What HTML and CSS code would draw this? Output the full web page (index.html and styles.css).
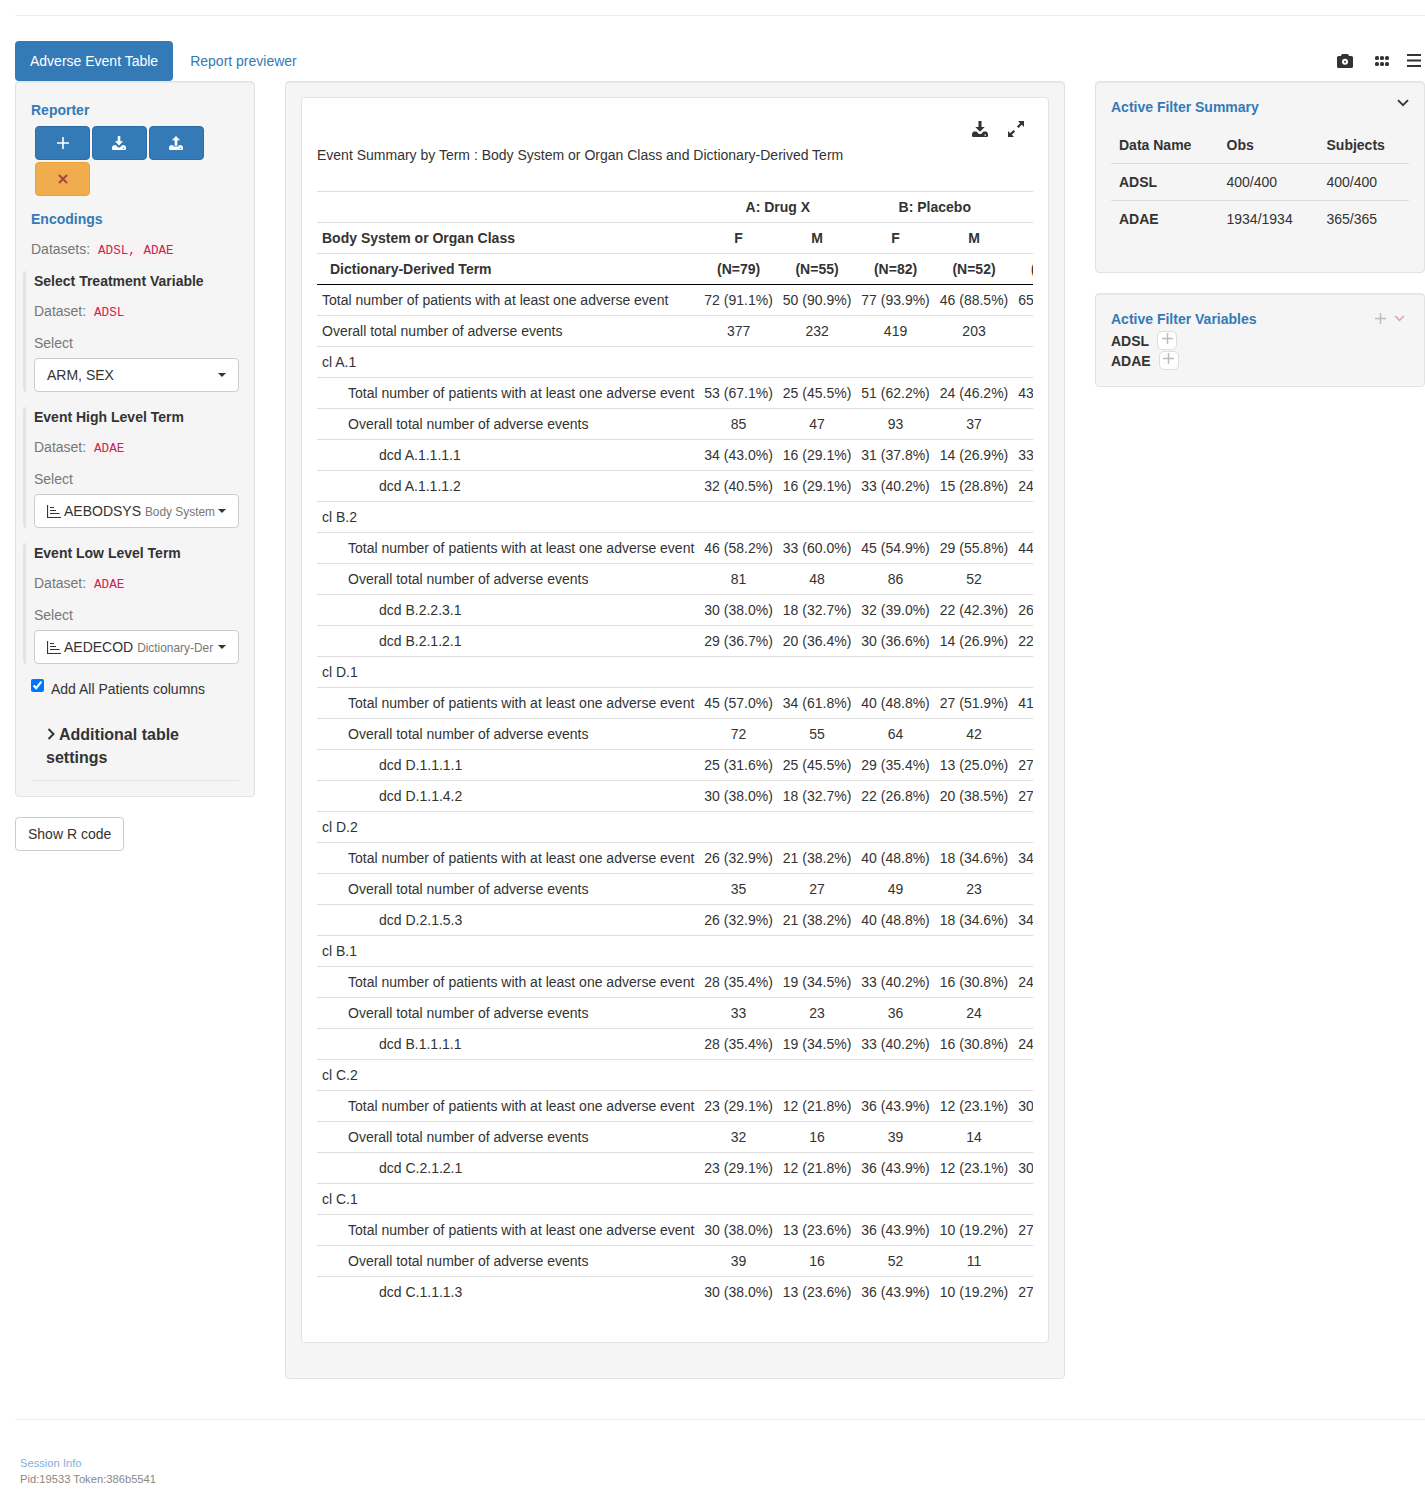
FILE: index.html
```html
<!DOCTYPE html>
<html lang="en">
<head>
  <meta charset="UTF-8">
  <title>Adverse Event Table</title>
  <link rel="stylesheet" href="styles.css">
</head>
<body>
  <svg class="icon-defs" width="0" height="0">
    <symbol id="i-download" viewBox="0 0 16 16">
      <path d="M6.500 0h3v6h3.200L8 10.800 3.300 6h3.200z"/>
      <path fill-rule="evenodd" d="M1.500 10.500h3L7 13h2l2.500-2.500h3L16 12.500v2.300a1.200 1.200 0 0 1-1.200 1.200H1.200A1.200 1.200 0 0 1 0 14.800v-2.300zM13.200 13.300a.8.800 0 1 0 0 1.600.8.800 0 0 0 0-1.600z"/>
    </symbol>
    <symbol id="i-upload" viewBox="0 0 16 16">
      <path d="M8 0l4.700 4.800H9.500v6.200h-3V4.800H3.300z"/>
      <path fill-rule="evenodd" d="M1.500 10.500h3.500V12h6v-1.500h3.500L16 12.500v2.300a1.200 1.200 0 0 1-1.200 1.200H1.200A1.200 1.200 0 0 1 0 14.800v-2.300zM13.200 13.300a.8.800 0 1 0 0 1.600.8.800 0 0 0 0-1.600z"/>
    </symbol>
    <symbol id="i-chart" viewBox="0 0 14 14">
      <path d="M0 1h1.100v11.900H14V14H0zM3 3h4v1.100H3zM3 6h6v1.100H3zM3 9h9.500v1.100H3z"/>
    </symbol>
    <symbol id="i-plus" viewBox="0 0 12 12">
      <path d="M5.200 0h1.600v5.200H12v1.600H6.800V12H5.200V6.800H0V5.200h5.200z"/>
    </symbol>
    <symbol id="i-chevron" viewBox="0 0 12 8">
      <path d="M1 1.200l5 5 5-5" fill="none" stroke="currentColor" stroke-width="1.800"/>
    </symbol>
  </svg>

  <div class="top-rule"></div>

  <div class="tabs-bar">
    <ul class="tabs">
      <li class="tab active">Adverse Event Table</li>
      <li class="tab">Report previewer</li>
    </ul>
    <div class="page-tools">
      <svg class="tool-camera" viewBox="0 0 16 14"><path fill-rule="evenodd" d="M5.500 0h5a1 1 0 0 1 .9.600L12 2h2.400A1.600 1.600 0 0 1 16 3.600v8.800a1.600 1.600 0 0 1-1.600 1.600H1.600A1.600 1.600 0 0 1 0 12.400V3.600A1.600 1.600 0 0 1 1.600 2H4l.6-1.400a1 1 0 0 1 .9-.6zM8 4.800a3 3 0 1 0 0 6 3 3 0 0 0 0-6z"/><circle cx="8" cy="7.800" r="1"/></svg>
      <svg class="tool-grid" viewBox="0 0 14 10"><rect width="4" height="4" rx="1.600"/><rect x="5" width="4" height="4" rx="1.600"/><rect x="10" width="4" height="4" rx="1.600"/><rect y="6" width="4" height="4" rx="1.600"/><rect x="5" y="6" width="4" height="4" rx="1.600"/><rect x="10" y="6" width="4" height="4" rx="1.600"/></svg>
      <svg class="tool-bars" viewBox="0 0 14 13"><rect width="14" height="2"/><rect y="5.500" width="14" height="2"/><rect y="11" width="14" height="2"/></svg>
    </div>
  </div>

  <div class="layout">
    <div class="left-col">
      <div class="well encodings">
        <div class="section-title">Reporter</div>
        <div class="reporter-btns">
          <button class="btn-rep"><svg class="ic-plus"><use href="#i-plus"/></svg></button>
          <button class="btn-rep"><svg class="ic-tray"><use href="#i-download"/></svg></button>
          <button class="btn-rep"><svg class="ic-tray"><use href="#i-upload"/></svg></button>
          <button class="btn-rep btn-warn"><svg class="ic-times" viewBox="0 0 10 10"><path d="M1 1l8 8M9 1l-8 8" fill="none" stroke="currentColor" stroke-width="2"/></svg></button>
        </div>
        <div class="section-title encodings-title">Encodings</div>
        <div class="dataset-line datasets-all">Datasets: <code>ADSL, ADAE</code></div>

        <div class="enc-block">
          <div class="enc-title">Select Treatment Variable</div>
          <div class="dataset-line">Dataset: <code>ADSL</code></div>
          <div class="select-label">Select</div>
          <div class="picker"><span class="picker-text">ARM, SEX</span><span class="caret"></span></div>
        </div>

        <div class="enc-block">
          <div class="enc-title">Event High Level Term</div>
          <div class="dataset-line">Dataset: <code>ADAE</code></div>
          <div class="select-label">Select</div>
          <div class="picker"><span class="picker-text"><svg class="ic-chart"><use href="#i-chart"/></svg>AEBODSYS <small>Body System</small></span><span class="caret"></span></div>
        </div>

        <div class="enc-block">
          <div class="enc-title">Event Low Level Term</div>
          <div class="dataset-line">Dataset: <code>ADAE</code></div>
          <div class="select-label">Select</div>
          <div class="picker"><span class="picker-text"><svg class="ic-chart"><use href="#i-chart"/></svg>AEDECOD <small>Dictionary-Der</small></span><span class="caret"></span></div>
        </div>

        <label class="check-line"><input type="checkbox" checked> Add All Patients columns</label>

        <div class="more-settings"><svg class="ic-more" viewBox="0 0 8 12"><path d="M1.500 1l5 5-5 5" fill="none" stroke="currentColor" stroke-width="2"/></svg>Additional table settings</div>
        <hr class="settings-rule">
      </div>
      <button class="btn-code">Show R code</button>
    </div>

    <div class="well main-col">
      <div class="table-card">
        <div class="card-tools">
          <svg class="ic-card-dl"><use href="#i-download"/></svg>
          <svg class="ic-card-exp" viewBox="0 0 16 16"><path d="M10 0h6v6l-2.200-2.200-3.300 3.300-1.600-1.600 3.300-3.300zM6 16H0v-6l2.200 2.200 3.300-3.300 1.600 1.600-3.300 3.300z"/></svg>
        </div>
        <div class="table-title">Event Summary by Term : Body System or Organ Class and Dictionary-Derived Term</div>
        <div class="table-clip">
          <table class="ae-table">
            <thead>
              <tr><th></th><th colspan="2">A: Drug X</th><th colspan="2">B: Placebo</th><th colspan="2">C: Combination</th></tr>
              <tr><th class="first">Body System or Organ Class</th><th>F</th><th>M</th><th>F</th><th>M</th><th>F</th><th>M</th></tr>
              <tr class="head-last"><th class="first sub">Dictionary-Derived Term</th><th>(N=79)</th><th>(N=55)</th><th>(N=82)</th><th>(N=52)</th><th>(N=70)</th><th>(N=62)</th></tr>
            </thead>
            <tbody>
              <tr><td>Total number of patients with at least one adverse event</td><td>72 (91.1%)</td><td>50 (90.9%)</td><td>77 (93.9%)</td><td>46 (88.5%)</td><td>65 (92.9%)</td><td></td></tr>
              <tr><td>Overall total number of adverse events</td><td>377</td><td>232</td><td>419</td><td>203</td><td></td><td></td></tr>
              <tr><td colspan="7">cl A.1</td></tr>
              <tr><td class="l1">Total number of patients with at least one adverse event</td><td>53 (67.1%)</td><td>25 (45.5%)</td><td>51 (62.2%)</td><td>24 (46.2%)</td><td>43 (61.4%)</td><td></td></tr>
              <tr><td class="l1">Overall total number of adverse events</td><td>85</td><td>47</td><td>93</td><td>37</td><td></td><td></td></tr>
              <tr><td class="l2">dcd A.1.1.1.1</td><td>34 (43.0%)</td><td>16 (29.1%)</td><td>31 (37.8%)</td><td>14 (26.9%)</td><td>33 (47.1%)</td><td></td></tr>
              <tr><td class="l2">dcd A.1.1.1.2</td><td>32 (40.5%)</td><td>16 (29.1%)</td><td>33 (40.2%)</td><td>15 (28.8%)</td><td>24 (34.3%)</td><td></td></tr>
              <tr><td colspan="7">cl B.2</td></tr>
              <tr><td class="l1">Total number of patients with at least one adverse event</td><td>46 (58.2%)</td><td>33 (60.0%)</td><td>45 (54.9%)</td><td>29 (55.8%)</td><td>44 (62.9%)</td><td></td></tr>
              <tr><td class="l1">Overall total number of adverse events</td><td>81</td><td>48</td><td>86</td><td>52</td><td></td><td></td></tr>
              <tr><td class="l2">dcd B.2.2.3.1</td><td>30 (38.0%)</td><td>18 (32.7%)</td><td>32 (39.0%)</td><td>22 (42.3%)</td><td>26 (37.1%)</td><td></td></tr>
              <tr><td class="l2">dcd B.2.1.2.1</td><td>29 (36.7%)</td><td>20 (36.4%)</td><td>30 (36.6%)</td><td>14 (26.9%)</td><td>22 (31.4%)</td><td></td></tr>
              <tr><td colspan="7">cl D.1</td></tr>
              <tr><td class="l1">Total number of patients with at least one adverse event</td><td>45 (57.0%)</td><td>34 (61.8%)</td><td>40 (48.8%)</td><td>27 (51.9%)</td><td>41 (58.6%)</td><td></td></tr>
              <tr><td class="l1">Overall total number of adverse events</td><td>72</td><td>55</td><td>64</td><td>42</td><td></td><td></td></tr>
              <tr><td class="l2">dcd D.1.1.1.1</td><td>25 (31.6%)</td><td>25 (45.5%)</td><td>29 (35.4%)</td><td>13 (25.0%)</td><td>27 (38.6%)</td><td></td></tr>
              <tr><td class="l2">dcd D.1.1.4.2</td><td>30 (38.0%)</td><td>18 (32.7%)</td><td>22 (26.8%)</td><td>20 (38.5%)</td><td>27 (38.6%)</td><td></td></tr>
              <tr><td colspan="7">cl D.2</td></tr>
              <tr><td class="l1">Total number of patients with at least one adverse event</td><td>26 (32.9%)</td><td>21 (38.2%)</td><td>40 (48.8%)</td><td>18 (34.6%)</td><td>34 (48.6%)</td><td></td></tr>
              <tr><td class="l1">Overall total number of adverse events</td><td>35</td><td>27</td><td>49</td><td>23</td><td></td><td></td></tr>
              <tr><td class="l2">dcd D.2.1.5.3</td><td>26 (32.9%)</td><td>21 (38.2%)</td><td>40 (48.8%)</td><td>18 (34.6%)</td><td>34 (48.6%)</td><td></td></tr>
              <tr><td colspan="7">cl B.1</td></tr>
              <tr><td class="l1">Total number of patients with at least one adverse event</td><td>28 (35.4%)</td><td>19 (34.5%)</td><td>33 (40.2%)</td><td>16 (30.8%)</td><td>24 (34.3%)</td><td></td></tr>
              <tr><td class="l1">Overall total number of adverse events</td><td>33</td><td>23</td><td>36</td><td>24</td><td></td><td></td></tr>
              <tr><td class="l2">dcd B.1.1.1.1</td><td>28 (35.4%)</td><td>19 (34.5%)</td><td>33 (40.2%)</td><td>16 (30.8%)</td><td>24 (34.3%)</td><td></td></tr>
              <tr><td colspan="7">cl C.2</td></tr>
              <tr><td class="l1">Total number of patients with at least one adverse event</td><td>23 (29.1%)</td><td>12 (21.8%)</td><td>36 (43.9%)</td><td>12 (23.1%)</td><td>30 (42.9%)</td><td></td></tr>
              <tr><td class="l1">Overall total number of adverse events</td><td>32</td><td>16</td><td>39</td><td>14</td><td></td><td></td></tr>
              <tr><td class="l2">dcd C.2.1.2.1</td><td>23 (29.1%)</td><td>12 (21.8%)</td><td>36 (43.9%)</td><td>12 (23.1%)</td><td>30 (42.9%)</td><td></td></tr>
              <tr><td colspan="7">cl C.1</td></tr>
              <tr><td class="l1">Total number of patients with at least one adverse event</td><td>30 (38.0%)</td><td>13 (23.6%)</td><td>36 (43.9%)</td><td>10 (19.2%)</td><td>27 (38.6%)</td><td></td></tr>
              <tr><td class="l1">Overall total number of adverse events</td><td>39</td><td>16</td><td>52</td><td>11</td><td></td><td></td></tr>
              <tr><td class="l2">dcd C.1.1.1.3</td><td>30 (38.0%)</td><td>13 (23.6%)</td><td>36 (43.9%)</td><td>10 (19.2%)</td><td>27 (38.6%)</td><td></td></tr>
            </tbody>
          </table>
        </div>
      </div>
    </div>

    <div class="right-col">
      <div class="well filter-summary">
        <div class="filter-head">
          <span class="section-title">Active Filter Summary</span>
          <svg class="ic-collapse"><use href="#i-chevron"/></svg>
        </div>
        <table class="summary-table">
          <thead><tr><th>Data Name</th><th>Obs</th><th>Subjects</th></tr></thead>
          <tbody>
            <tr><th>ADSL</th><td>400/400</td><td>400/400</td></tr>
            <tr><th>ADAE</th><td>1934/1934</td><td>365/365</td></tr>
          </tbody>
        </table>
      </div>
      <div class="well filter-vars">
        <div class="filter-head">
          <span class="section-title">Active Filter Variables</span>
          <span class="vars-tools">
            <svg class="ic-add"><use href="#i-plus"/></svg>
            <svg class="ic-collapse-red"><use href="#i-chevron"/></svg>
          </span>
        </div>
        <div class="var-list">
          <div class="var-row"><b>ADSL</b><span class="var-add"><svg class="ic-add"><use href="#i-plus"/></svg></span></div>
          <div class="var-row"><b>ADAE</b><span class="var-add"><svg class="ic-add"><use href="#i-plus"/></svg></span></div>
        </div>
      </div>
    </div>
  </div>

  <footer class="page-foot">
    <div class="session-link">Session Info</div>
    <div class="session-ids">Pid:19533 Token:386b5541</div>
  </footer>
</body>
</html>
```
FILE: styles.css
```css
* {
  box-sizing: border-box;
}

html, body {
  overflow-x: hidden;
}

body {
  margin: 0;
  padding: 0 0 0 15px;
  font-family: "Liberation Sans", Arial, sans-serif;
  font-size: 14px;
  line-height: 20px;
  color: #333;
  background: #fff;
}

.icon-defs {
  position: absolute;
}

.top-rule {
  height: 16px;
  margin-left: 0;
  border-bottom: 1px solid #eee;
}

/* tabs row */
.tabs-bar {
  display: flex;
  justify-content: space-between;
  margin-top: 25px;
  height: 40px;
}

.tabs {
  display: flex;
  gap: 2px;
  list-style: none;
  margin: 0;
  padding: 0;
}

.tab {
  padding: 10px 15px;
  border-radius: 4px;
  color: #337ab7;
}

.tab.active {
  background: #337ab7;
  color: #fff;
}

.page-tools {
  display: flex;
  align-items: center;
  padding: 0 4px 1px 0;
  fill: #333;
}

.tool-camera {
  width: 16px;
  height: 14px;
  margin-right: 22px;
}

.tool-grid {
  width: 14px;
  height: 10px;
  margin-right: 18px;
}

.tool-bars {
  width: 14px;
  height: 13px;
}

/* three columns */
.layout {
  display: flex;
  gap: 30px;
  align-items: flex-start;
}

.well {
  background: #f5f5f5;
  border: 1px solid #e3e3e3;
  border-radius: 4px;
  box-shadow: inset 0 1px 1px rgba(0, 0, 0, .05);
}

.section-title {
  color: #337ab7;
  font-weight: bold;
}

.left-col {
  width: 240px;
  flex: none;
}

.encodings {
  padding: 18px 15px 16px;
  height: 716px;
}

.reporter-btns {
  display: flex;
  flex-wrap: wrap;
  gap: 2px;
  margin: 6px 0 0 4px;
  width: 175px;
}

.btn-rep {
  display: flex;
  align-items: center;
  justify-content: center;
  width: 55px;
  height: 34px;
  padding: 0;
  background: #337ab7;
  border: 1px solid #2e6da4;
  border-radius: 4px;
  color: #fff;
  fill: #fff;
}

.btn-warn {
  background: #f0ad4e;
  border-color: #eea236;
  color: #a94442;
}

.ic-plus {
  width: 12px;
  height: 12px;
}

.ic-tray {
  width: 14px;
  height: 14px;
  margin: 0 2px 1px 0;
}

.ic-times {
  width: 10px;
  height: 10px;
}

.encodings-title {
  margin-top: 13px;
}

.dataset-line {
  color: #777;
  margin-top: 10px;
}

code {
  font-family: "Liberation Mono", monospace;
  font-size: 12.6px;
  color: #c7254e;
  background: #f9f2f4;
  padding: 2px 4px;
  border-radius: 4px;
}

.datasets-all {
  margin-bottom: 10px;
}

.enc-block {
  margin: 0 0 15px -8px;
  padding-left: 8px;
  border-left: 3px solid #e3e3e3;
  border-radius: 4px;
  height: 121px;
}

.enc-title {
  font-weight: bold;
}

.select-label {
  color: #777;
  margin-top: 10px;
}

.enc-block .dataset-line {
  margin-top: 10px;
}

.picker {
  display: flex;
  align-items: center;
  justify-content: space-between;
  height: 34px;
  margin-top: 5px;
  padding: 0 12px;
  background: #fff;
  border: 1px solid #ccc;
  border-radius: 4px;
  white-space: nowrap;
  overflow: hidden;
}

.picker small {
  font-size: 11.9px;
  color: #777;
}

.caret {
  flex: none;
  width: 0;
  height: 0;
  margin-left: 2px;
  border-top: 4px solid #333;
  border-left: 4px solid transparent;
  border-right: 4px solid transparent;
}

.ic-chart {
  width: 14px;
  height: 14px;
  margin-right: 3px;
  vertical-align: -2px;
  fill: #333;
}

.check-line {
  display: block;
  padding-left: 20px;
  position: relative;
}

.check-line input {
  position: absolute;
  left: 0;
  top: 0;
  width: 13px;
  height: 13px;
  margin: 0;
}

.more-settings {
  margin: 24px 0 0 15px;
  font-size: 16px;
  line-height: 23px;
  font-weight: bold;
}

.ic-more {
  width: 8px;
  height: 12px;
  margin: 0 4px 0 1px;
}

.settings-rule {
  margin: 11px 0 0;
  border: 0;
  border-top: 1px solid #e3e3e3;
}

.btn-code {
  display: block;
  height: 34px;
  margin-top: 20px;
  padding: 0 12px;
  background: #fff;
  border: 1px solid #ccc;
  border-radius: 4px;
  color: #333;
  font: inherit;
}

/* centre table */
.main-col {
  width: 780px;
  flex: none;
  padding: 15px;
  height: 1298px;
}

.table-card {
  background: #fff;
  border: 1px solid #e3e3e3;
  border-radius: 4px;
  padding: 15px;
  height: 1246px;
}

.card-tools {
  display: flex;
  justify-content: flex-end;
  gap: 20px;
  padding: 8px 9px 0 0;
  fill: #333;
}

.ic-card-dl, .ic-card-exp {
  width: 16px;
  height: 16px;
}

.table-title {
  margin-top: 8px;
}

.table-clip {
  margin-top: 26px;
  overflow: hidden;
}

.ae-table {
  border-collapse: collapse;
  white-space: nowrap;
}

.ae-table th, .ae-table td {
  height: 31px;
  padding: 5px;
  text-align: center;
  border-top: 1px solid #ddd;
}

.ae-table td:first-child, .ae-table th.first {
  text-align: left;
}

.ae-table th.sub {
  padding-left: 13px;
}

.ae-table .head-last th {
  border-bottom: 1px solid #000;
}

.ae-table .head-last th:last-child {
  min-width: 78px;
}

.ae-table tbody tr:first-child td {
  border-top: 0;
}

.ae-table td.l1 {
  padding-left: 31px;
}

.ae-table td.l2 {
  padding-left: 62px;
}

/* right side */
.right-col {
  width: 330px;
  flex: none;
  display: flex;
  flex-direction: column;
  gap: 20px;
}

.filter-summary {
  height: 192px;
  padding: 15px;
}

.filter-head {
  display: flex;
  justify-content: space-between;
}

.ic-collapse {
  width: 12px;
  height: 8px;
  margin-top: 2px;
  color: #333;
}

.summary-table {
  width: 298px;
  margin-top: 10px;
  border-collapse: collapse;
  table-layout: fixed;
}

.summary-table th, .summary-table td {
  padding: 8px;
  height: 37px;
  text-align: left;
  border-top: 1px solid #ddd;
}

.summary-table thead th {
  height: 36px;
  border-top: 0;
}

.summary-table th:nth-child(1) { width: 107.5px; }
.summary-table th:nth-child(2) { width: 100px; }

.filter-vars {
  height: 94px;
  padding: 15px;
  color: #333;
}

.vars-tools {
  display: flex;
  gap: 8px;
  padding: 4px 4px 0 0;
}

.ic-add {
  width: 11px;
  height: 11px;
  fill: #bbb;
}

.ic-collapse-red {
  width: 11px;
  height: 7px;
  margin-top: 2px;
  color: #d9a6a6;
}

.var-list {
  margin-top: 2px;
}

.var-row {
  display: flex;
  align-items: center;
  gap: 8px;
  height: 20px;
  font-weight: bold;
}

.var-add {
  display: flex;
  justify-content: center;
  width: 20px;
  height: 19px;
  padding-top: 1px;
  margin-top: -2px;
  background: #fff;
  border: 1px solid #ddd;
  border-radius: 5px;
}

/* footer */
.page-foot {
  margin-top: 40px;
  height: 88px;
  padding: 35px 0 0 5px;
  border-top: 1px solid #eee;
  font-size: 11.2px;
  line-height: 16px;
  color: #888;
}

.session-link {
  color: #337ab7;
  opacity: .6;
}
```
